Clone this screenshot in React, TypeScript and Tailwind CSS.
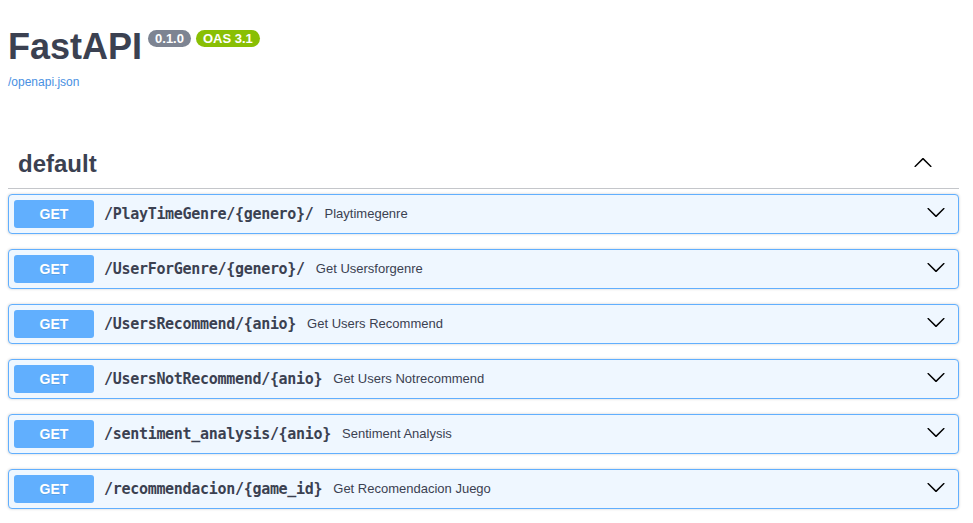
const endpoints = [
  { path: "/PlayTimeGenre/{genero}/", summary: "Playtimegenre" },
  { path: "/UserForGenre/{genero}/", summary: "Get Usersforgenre" },
  { path: "/UsersRecommend/{anio}", summary: "Get Users Recommend" },
  { path: "/UsersNotRecommend/{anio}", summary: "Get Users Notrecommend" },
  { path: "/sentiment_analysis/{anio}", summary: "Sentiment Analysis" },
  { path: "/recommendacion/{game_id}", summary: "Get Recomendacion Juego" },
];

const arrowDown =
  "M17.418 6.109c.272-.268.709-.268.979 0s.271.701 0 .969l-7.908 7.83c-.27.268-.707.268-.979 0l-7.908-7.83c-.27-.268-.27-.701 0-.969.271-.268.709-.268.979 0L10 13.25l7.418-7.141z";
const arrowUp =
  "M17.418 14.908c.272.268.709.268.979 0s.271-.701 0-.969l-7.908-7.83c-.27-.268-.707-.268-.979 0l-7.908 7.83c-.27.268-.27.701 0 .969.271.268.709.268.979 0L10 7.767l7.418 7.141z";

function Arrow({ d }: { d: string }) {
  return (
    <svg width="20" height="20" viewBox="0 0 20 20" className="shrink-0">
      <path d={d} fill="#000" />
    </svg>
  );
}

function OpBlock({ path, summary }: { path: string; summary: string }) {
  return (
    <div className="mb-[15px] flex items-center rounded-[4px] border border-[#61affe] bg-[#eff7ff] p-[5px] shadow-[0_0_3px_rgba(0,0,0,0.19)]">
      <span className="min-w-[80px] rounded-[3px] bg-[#61affe] py-[6px] text-center text-[14px] leading-[16px] font-bold text-white [text-shadow:0_1px_0_rgba(0,0,0,0.1)]">
        GET
      </span>
      <span className="pr-[11px] pl-[10px] font-['DejaVu_Sans_Mono',monospace] text-[15px] font-bold tracking-[-0.3px] text-[#3b4151]">
        {path}
      </span>
      <span className="flex-1 text-[13px] text-[#3b4151]">{summary}</span>
      <span className="mr-[7px] flex -translate-y-[2px]">
        <Arrow d={arrowDown} />
      </span>
    </div>
  );
}

export default function App() {
  return (
    <div className="min-h-screen bg-white font-['Liberation_Sans',Arial,sans-serif] text-[#3b4151]">
      <div className="ml-[8px] w-[951px] pt-[26px]">
        <div className="flex items-start">
          <h2 className="text-[36px] leading-[41px] font-bold">FastAPI</h2>
          <span className="mt-[4px] ml-[6px] rounded-[57px] bg-[#7d8492] px-[7px] text-[13px] leading-[17px] font-bold text-white">
            0.1.0
          </span>
          <span className="mt-[4px] ml-[5px] rounded-[57px] bg-[#89bf04] px-[7px] text-[13px] leading-[17px] font-bold text-white">
            OAS 3.1
          </span>
        </div>
        <a href="#" className="mt-[8px] block text-[12px] leading-[14px] text-[#4990e2]">
          /openapi.json
        </a>

        <div className="mt-[51px] mb-[5px] flex items-center border-b border-[rgba(59,65,81,0.3)] py-[10px] pr-[20px] pl-[10px]">
          <h3 className="flex-1 text-[24px] leading-[28px] font-bold">default</h3>
          <span className="mr-[6px] flex -translate-y-[2px]">
            <Arrow d={arrowUp} />
          </span>
        </div>

        {endpoints.map((e) => (
          <OpBlock key={e.path} path={e.path} summary={e.summary} />
        ))}
      </div>
    </div>
  );
}
